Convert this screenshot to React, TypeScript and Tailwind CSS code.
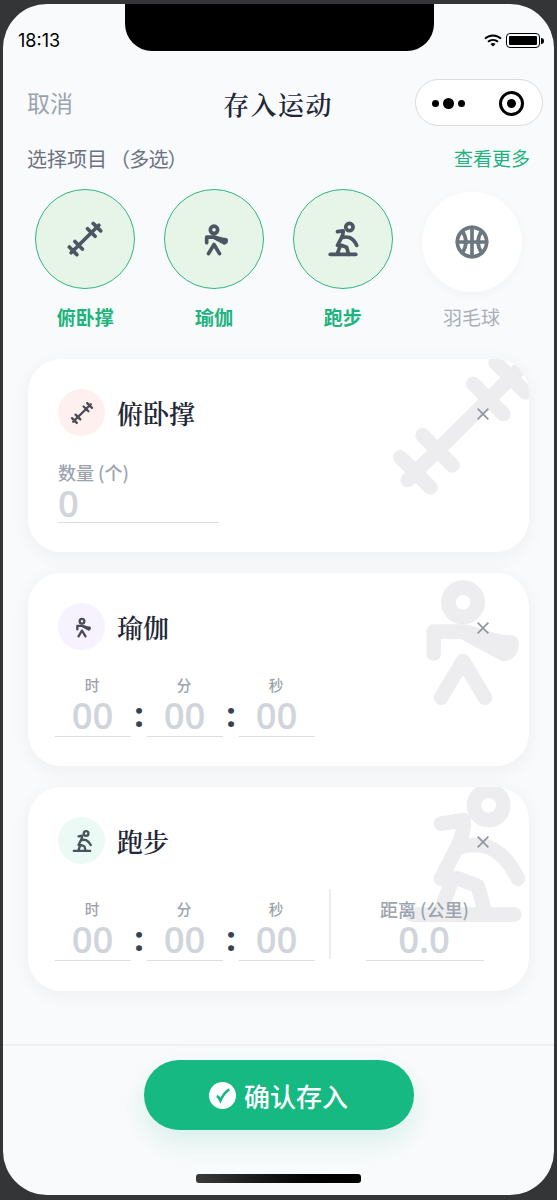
import React from "react";

type IconName = "dumbbell" | "yoga" | "run" | "ball";

const icons: Record<IconName, React.ReactNode> = {
  dumbbell: (
    <path d="M4.45 19.5 19.55 4.5M3.45 16.4l4.1 4.1M6.5 13.4l4.05 4.1M13.4 6.4l4.1 4.1M16.45 3.5l4.1 4.05" />
  ),
  yoga: (
    <>
      <circle cx="12" cy="7" r="2" />
      <path d="M8 14v-3h4l5.6 3" />
      <path d="M12 11c2 .2 3.4 1.4 6.6 1.5.1.8-.3 1.4-1 1.5z" fill="currentColor" />
      <path d="M9 20l3-5 3 5" />
    </>
  ),
  run: (
    <>
      <circle cx="15.5" cy="5.5" r="2" />
      <path d="M9 8l3.1-.5c.1 1.4-.3 2.5-.9 3.7L9 15.5h2.4l2.6 1 1.1 3.9" />
      <path d="M10.3 16.3L8.9 20M11.6 11.2c1.3-.4 2.6-.4 3.9 0 1.8.8 3 2.2 4 4.3M5 20.4h14" />
    </>
  ),
  ball: (
    <>
      <circle cx="12" cy="12" r="8" />
      <path d="M12 4v16M4 12h16M6.8 6.2c2.4 3.7 2.4 7.9 0 11.6M17.2 6.2c-2.4 3.7-2.4 7.9 0 11.6" />
    </>
  ),
};

const SportIcon = ({ name, className }: { name: IconName; className?: string }) => (
  <svg
    viewBox="0 0 24 24"
    className={className}
    fill="none"
    stroke="currentColor"
    strokeWidth="2"
    strokeLinecap="round"
    strokeLinejoin="round"
  >
    {icons[name]}
  </svg>
);

const projects: { icon: IconName; name: string; selected: boolean }[] = [
  { icon: "dumbbell", name: "俯卧撑", selected: true },
  { icon: "yoga", name: "瑜伽", selected: true },
  { icon: "run", name: "跑步", selected: true },
  { icon: "ball", name: "羽毛球", selected: false },
];

const StatusBar = () => (
  <div className="h-[66px] pt-[25px] pl-[15px] pr-[10px] flex justify-between items-start">
    <div className="font-['Inter'] text-[18px] leading-[23px] text-black">18:13</div>
    <div className="flex items-center gap-1 pt-[4px]">
      <svg viewBox="0 0 18 13" className="w-[18px] h-[13px]" fill="none" stroke="#000" strokeWidth="2">
        <path d="M1 4.6C5.5.3 12.5.3 17 4.6" />
        <path d="M4 7.8c2.9-2.5 7.1-2.5 10 0" />
        <path d="M6.5 10C8 8.7 10 8.7 11.5 10L9 12.6z" fill="#000" stroke="none" />
      </svg>
      <div className="flex items-center">
        <div className="w-[34px] h-[15px] border-[1.5px] border-black rounded-[4px] p-[2px]">
          <div className="h-full bg-black rounded-[1px]" />
        </div>
        <div className="w-[3px] h-[6px] ml-px bg-black rounded-r-full" />
      </div>
    </div>
  </div>
);

const Header = () => (
  <div className="h-[64px] pl-6 pr-[11px] grid grid-cols-[1fr_auto_1fr] items-center">
    <button className="text-left text-[23px] leading-7 text-[#9ca3af]">取消</button>
    <div className="font-['Noto_Serif_CJK_SC','Noto_Serif_SC',serif] font-semibold text-[26px] tracking-[1.4px] leading-8 text-[#1f2937] -ml-[14px] pt-1">
      存入运动
    </div>
    <div className="justify-self-end w-[128px] h-[47px] rounded-full bg-white border-[1.5px] border-[#d9dadc] flex items-center justify-between pl-[16px] pr-[18px]">
      <div className="flex items-center gap-[4px] pt-[2px]">
        <div className="w-[7px] h-[7px] rounded-full bg-black" />
        <div className="w-[11px] h-[11px] rounded-full bg-black" />
        <div className="w-[7px] h-[7px] rounded-full bg-black" />
      </div>
      <div className="w-[25px] h-[25px] mt-[2px] rounded-full border-[3px] border-black flex items-center justify-center">
        <div className="w-[9px] h-[9px] rounded-full bg-black" />
      </div>
    </div>
  </div>
);

const CloseIcon = () => (
  <button className="p-1 mt-[3px]">
    <svg viewBox="0 0 12 12" className="w-3 h-3" stroke="#9299a6" strokeWidth="1.8">
      <path d="M.6.6l10.8 10.8M11.4.6L.6 11.4" />
    </svg>
  </button>
);

type CardProps = {
  icon: IconName;
  title: string;
  tint: string;
  height: string;
  children: React.ReactNode;
};

const Card = ({ icon, title, tint, height, children }: CardProps) => (
  <div
    className={`relative overflow-hidden rounded-[33px] bg-white shadow-[0_4px_20px_rgba(0,0,0,0.05)] pt-[30px] pl-[30px] pr-9 ${height}`}
  >
    <SportIcon name={icon} className="absolute -top-[22px] -right-[22px] w-[176px] h-[176px] text-[#ededf0]" />
    <div className="relative flex items-center h-[47px]">
      <div className={`w-[47px] h-[47px] rounded-full flex items-center justify-center ${tint}`}>
        <SportIcon name={icon} className="w-7 h-7" />
      </div>
      <div className="ml-3 flex-1 font-['Noto_Serif_CJK_SC','Noto_Serif_SC',serif] font-semibold text-[26px] leading-8 text-[#1f2937]">
        {title}
      </div>
      <CloseIcon />
    </div>
    {children}
  </div>
);

const TimeInputs = () => (
  <div className="flex -ml-[3px]">
    {["时", "分", "秒"].map((label, i) => (
      <React.Fragment key={label}>
        {i > 0 && (
          <div className="w-4 h-[60px] pt-[18px] font-['Noto_Sans'] font-bold text-[34px] leading-[40px] text-[#374151] flex justify-center">
            :
          </div>
        )}
        <div className="w-[76px] h-[61px] text-center border-b border-[#dcdee2]">
          <div className="text-[14.5px] leading-[18px] pr-[2px] font-medium text-[#9ca3af]">{label}</div>
          <div className="font-['Open_Sans'] font-semibold text-[36.5px] leading-[43px] pr-px text-[#d1d5db]">00</div>
        </div>
      </React.Fragment>
    ))}
  </div>
);

const App = () => {
  return (
    <div className="w-[557px] h-[1200px] bg-[#343536] pt-1 pl-[3px] font-['Noto_Sans_CJK_SC',sans-serif]">
      <div className="relative w-[551px] h-[1191px] rounded-[44px] overflow-hidden bg-[#f9fafc] flex flex-col">
        <div className="absolute top-0 left-[122px] w-[309px] h-[47px] bg-black rounded-b-[27px]" />
        <StatusBar />
        <Header />
        <div className="h-[48px] pt-px pl-6 pr-6 flex items-center justify-between">
          {/* the full-width brackets sit a little tighter than the characters */}
          <div className="text-[20px] text-[#6b7280]">
            选择项目<span className="ml-[3px] tracking-[-0.8px]">（多选）</span>
          </div>
          <div className="text-[19px] text-[#1db47d]">查看更多</div>
        </div>
        <div className="h-[173px] pt-[10px] pl-[18px] pr-[18px] grid grid-cols-4">
          {projects.map((p) => (
            <div key={p.name} className="flex flex-col items-center">
              <div
                className={
                  p.selected
                    ? "w-[100px] h-[100px] rounded-full flex items-center justify-center bg-[#e7f5e8] border-[1.5px] border-[#2fb483] -translate-y-[3px]"
                    : "w-[100px] h-[100px] rounded-full flex items-center justify-center bg-white shadow-[0_3px_12px_rgba(0,0,0,0.03)]"
                }
              >
                <SportIcon
                  name={p.icon}
                  className={p.selected ? "w-11 h-11 text-[#4b5563]" : "w-11 h-11 text-[#6c7780]"}
                />
              </div>
              <div
                className={
                  p.selected
                    ? "mt-[11px] text-[19px] leading-7 font-bold text-[#1db47d]"
                    : "mt-[11px] text-[19px] leading-7 text-[#a9aeb8]"
                }
              >
                {p.name}
              </div>
            </div>
          ))}
        </div>

        <div className="flex-1 px-[25px] flex flex-col gap-[21px] pt-[4px]">
          <Card icon="dumbbell" title="俯卧撑" tint="bg-[#fff0f0] text-[#4b4b55]" height="h-[193px]">
            <div className="relative mt-[26px] w-[161px] h-[61px] border-b border-[#dcdee2]">
              <div className="text-[18px] leading-[20px] font-medium text-[#9ca3af]">数量 (个)</div>
              <div className="font-['Open_Sans'] font-semibold text-[36.5px] leading-[42px] text-[#d1d5db]">0</div>
            </div>
          </Card>
          <Card icon="yoga" title="瑜伽" tint="bg-[#f6f2ff] text-[#4b4b60]" height="h-[193px]">
            <div className="relative mt-[26px]">
              <TimeInputs />
            </div>
          </Card>
          <Card icon="run" title="跑步" tint="bg-[#ecfaf5] text-[#45555a]" height="h-[204px]">
            <div className="relative mt-[36px] flex">
              <TimeInputs />
              <div className="w-[2px] h-[70px] ml-[14px] -mt-[11px] bg-[#ebecef]" />
              <div className="ml-[35px] w-[118px] h-[61px] text-center border-b border-[#dcdee2]">
                <div className="text-[18px] leading-[19px] pr-px font-medium text-[#9ca3af]">距离 (公里)</div>
                <div className="font-['Open_Sans'] font-semibold text-[36.5px] leading-[41px] pr-[2px] text-[#d1d5db]">0.0</div>
              </div>
            </div>
          </Card>
        </div>

        <div className="h-[151px] border-t-2 border-[#eef0f3] flex flex-col items-center pt-[14px]">
          <button className="w-[270px] h-[70px] rounded-full bg-[#15b981] text-white flex items-center justify-center gap-2 shadow-[0_12px_28px_rgba(16,185,129,0.14)]">
            <svg viewBox="0 0 26 26" className="w-[27px] h-[27px]">
              <circle cx="13" cy="13" r="13" fill="#fff" />
              <path
                d="M7.5 13.5q2 .8 3.5 4.2Q14 11 19.5 7"
                fill="none"
                stroke="#15b981"
                strokeWidth="2.6"
              />
            </svg>
            <span className="text-[26px] leading-8 font-medium pt-px">确认存入</span>
          </button>
          <div className="mt-[44px] w-[165px] h-[9px] rounded-[3px] bg-linear-to-r from-[#3a3a3a] to-black" />
        </div>
      </div>
    </div>
  );
};

export default App;
